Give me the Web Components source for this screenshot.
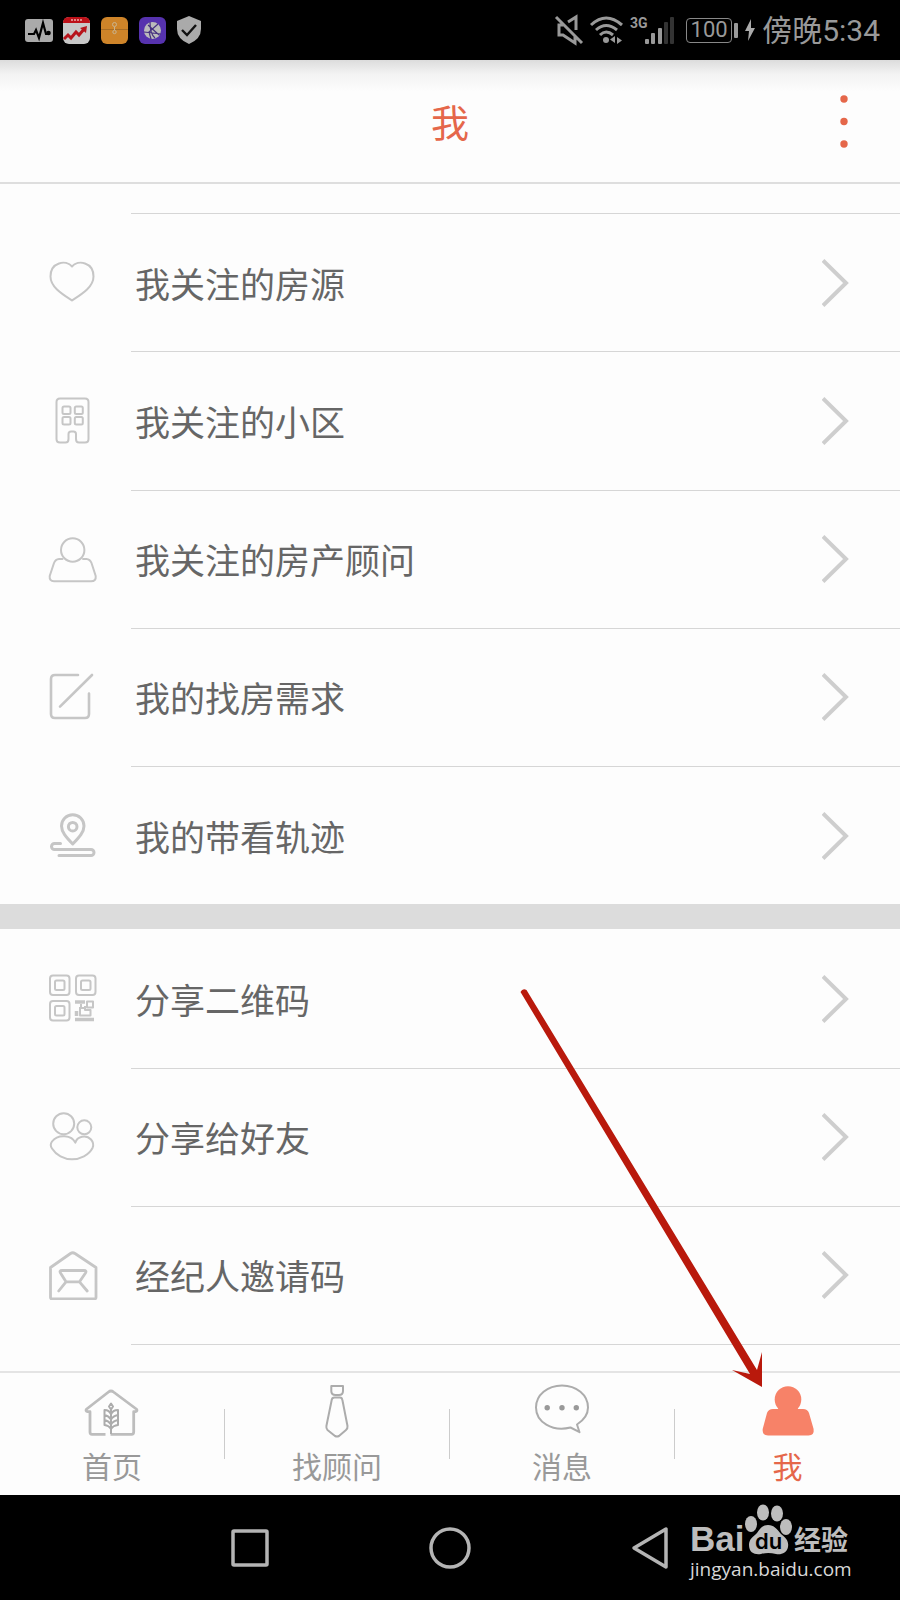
<!DOCTYPE html>
<html lang="zh-CN">
<head>
<meta charset="utf-8">
<meta name="viewport" content="width=device-width, initial-scale=1">
<title>我</title>
<style>
html, body { margin: 0; }
body { background: #fdfdfd; font-family: "Noto Sans CJK SC", sans-serif; }
</style>
</head>
<body>
<profile-screen>
  <status-bar slot="status"></status-bar>
  <app-header slot="header">我</app-header>
  <menu-section lead>
    <menu-row icon="heart">我关注的房源</menu-row>
    <menu-row icon="building">我关注的小区</menu-row>
    <menu-row icon="person">我关注的房产顾问</menu-row>
    <menu-row icon="edit">我的找房需求</menu-row>
    <menu-row icon="route">我的带看轨迹</menu-row>
  </menu-section>
  <menu-section band>
    <menu-row icon="qr" first>分享二维码</menu-row>
    <menu-row icon="friends">分享给好友</menu-row>
    <menu-row icon="invite">经纪人邀请码</menu-row>
  </menu-section>
  <tab-bar slot="tabs">
    <tab-item icon="home">首页</tab-item>
    <tab-item icon="tie">找顾问</tab-item>
    <tab-item icon="chat">消息</tab-item>
    <tab-item icon="me" active>我</tab-item>
  </tab-bar>
  <system-nav slot="nav"><site-mark></site-mark></system-nav>
  <pointer-arrow slot="tabs"></pointer-arrow>
</profile-screen>

<script>
const ICONS = {
  heart: '<path d="M24 9.500C18 2.500 2.500 5 2.500 19.500C2.500 30 14 37 24 43.500C34 37 45.500 30 45.500 19.500C45.500 5 30 2.500 24 9.500Z"/>',
  building: '<path d="M12 3.500H37Q40.500 3.500 40.500 7V44Q40.500 47.500 37 47.500H31Q28 47.500 28 44V39Q28 36.500 25.500 36.500H23Q20.500 36.500 20.500 39V44Q20.500 47.500 17.500 47.500H12Q8.500 47.500 8.500 44V7Q8.500 3.500 12 3.500Z"/><rect x="14.500" y="11.500" width="8" height="7.500" rx="1.500"/><rect x="26.800" y="11.500" width="8" height="7.500" rx="1.500"/><rect x="14.500" y="22" width="8" height="7.500" rx="1.500"/><rect x="26.800" y="22" width="8" height="7.500" rx="1.500"/>',
  person: '<circle cx="24.700" cy="16" r="11.700"/><path d="M14.500 25H11Q7.500 25.200 6 29L1.700 42Q1.200 47.300 6 47.300H43Q48.300 47.300 47.700 42L43.500 29Q42 25.200 38.500 25H35"/>',
  edit: '<path stroke-width="2.600" d="M30 3H7Q3 3 3 7V42Q3 46 7 46H37Q41 46 41 42V21.500M44 3L12 34.700"/>',
  route: '<g stroke-width="3"><path d="M24.700 34C18 27 13.500 22 13.500 16A11.200 11.200 0 0 1 36 16C36 22 31.500 27 24.700 34Z"/><circle cx="24.700" cy="16.700" r="4.300"/><path d="M12.500 33.500H6.500A3 3 0 0 0 6.500 39.500H43A3 3 0 0 1 43 45.500H11"/></g>',
  qr: '<rect x="2" y="2.500" width="19.500" height="19.500" rx="3"/><rect x="7" y="7.500" width="9.500" height="9.500" rx="1.500"/><rect x="28" y="2.500" width="19.500" height="19.500" rx="3"/><rect x="33" y="7.500" width="9.500" height="9.500" rx="1.500"/><rect x="2" y="28" width="19.500" height="19.500" rx="3"/><rect x="7" y="33" width="9.500" height="9.500" rx="1.500"/><g stroke-linecap="butt"><path stroke-width="3.500" d="M27 29H37M27 46.500H46M28.500 38V43"/><path d="M33 31V35H36M32 34V42.500H42.500V37H37V33"/><rect x="39" y="28.500" width="6" height="6"/></g>',
  friends: '<circle cx="15.700" cy="11.700" r="10.500"/><circle cx="36.300" cy="15.300" r="7"/><path d="M27.300 30.700C24 23 10 21.500 4 29.500Q1.500 33 4 36.500C8 43 16 47.300 24 47.300C32 47.300 41 43 44.500 36Q46.500 31.500 43 27.500C38 22 29 24.500 27.300 30.700Z"/>',
  invite: '<path stroke-width="2.800" d="M22.500 3.500Q24.700 2 27 3.500L48 17.500V47.500Q48 49 46 49H4.500Q2.500 49 2.500 47.500V17.500ZM14 20.500H36Q39 20.500 37.500 23L31.500 31.800H18L12.500 23Q11 20.500 14 20.500ZM18 31.800L10.700 41M31.500 31.800L39.200 41"/>',
  home: '<path stroke="#bdbdbd" stroke-width="2.800" d="M21.500 51.300H8Q6 51.300 6 49V28.700H3.500Q1 28 2.700 26L24.500 9Q27 7 29.500 9L52.300 26Q54 28 51.500 28.700H49.700V49Q49.700 51.300 47.500 51.300H26.500"/><path d="M27 51V25M27 20.500L25 23.500L27 26.500L29 23.500ZM20.500 27Q25.500 27 27 31.500Q28.500 27 34 27V32Q29 33 27 36.500Q25 33 20.500 32ZM20.500 32V37Q25 38 27 41.500Q29 38 34 37V32M20.500 37V42Q25 42.500 27 46Q29 42.500 34 42V37"/>',
  tie: '<path d="M22.300 3H34V8Q34 12 30 12H26.500Q22.300 12 22.300 8ZM25.500 14.500H31Q33 14.500 33.400 17L38.500 43Q38.800 45.500 37 47L30 53Q28 54 26 53L18.500 47Q17 45.500 17.400 43L22.700 17Q23 14.500 25.500 14.500Z"/>',
  chat: '<path d="M36.500 44.500C18 49 2 39 2 24.500C2 12 13.500 2.500 28 2.500S54 12 54 24.500C54 31 50 37 43 41.500L45.500 49.200Z"/><g fill="currentColor" stroke="none"><circle cx="13.200" cy="24.700" r="2.700"/><circle cx="28" cy="24.700" r="2.700"/><circle cx="42.300" cy="24.700" r="2.700"/></g>',
  me: '<g fill="#f78268" stroke="none"><circle cx="28" cy="16.500" r="13.300"/><path d="M13 26H18L20 22H36L38 26H43Q47.500 26 49 30L53.600 46Q54.500 52.500 48.500 52.500H8Q2 52.500 2.700 46L7 30Q8.500 26 13 26Z"/></g>'
};

function define(name, render) {
  customElements.define(name, class extends HTMLElement {
    constructor() {
      super();
      this.attachShadow({ mode: 'open' });
    }
    connectedCallback() {
      this.shadowRoot.innerHTML = render(this);
    }
  });
}

define('profile-screen', () => `
<style>
:host { display: flex; flex-direction: column; min-height: 100vh; }
main { flex: 1; display: flex; flex-direction: column; padding-bottom: 26px; }
footer { position: relative; }
</style>
<slot name="status"></slot>
<slot name="header"></slot>
<main><slot></slot></main>
<footer><slot name="tabs"></slot></footer>
<slot name="nav"></slot>`);

define('status-bar', () => `
<style>
:host { display: flex; align-items: center; justify-content: space-between; height: 60px; padding: 0 20px 0 25px; background: #000; color: #999; box-sizing: border-box; }
div { display: flex; align-items: center; }
.apps { gap: 10px; }
svg { display: block; overflow: visible; }
.state { gap: 7px; }
.signal { margin-right: 4px; }
.battery { display: flex; align-items: center; gap: 2px; }
.level { box-sizing: border-box; width: 46px; height: 25px; border: 1px solid #888; border-radius: 4px; font: 22px/22px Roboto, sans-serif; text-align: center; display: block; }
.cap { width: 4px; height: 15px; background: #999; border-radius: 1px; }
time { font: 30px/40px Roboto, "Noto Sans CJK SC", sans-serif; padding-top: 2px; }
</style>
<div class="apps">
<svg width="28" height="28" viewBox="0 0 28 28"><rect y="3" width="28" height="23" rx="3" fill="#aaa"/><path d="M3 18H9L11 14L14 22L18 7L21 18H24" fill="none" stroke="#000" stroke-width="2.200"/><circle cx="23.500" cy="17" r="2.300"/></svg>
<svg width="28" height="28" viewBox="0 0 28 28"><rect y="1" width="27" height="27" rx="6" fill="#c8c8c8"/><path d="M0 7Q0 1 6 1H21Q27 1 27 7Z" fill="#bd1119"/><path d="M8 4H19" stroke="#d88" stroke-width="2" stroke-dasharray="2 1"/><path d="M1 23L5 19L8 22L13 16L16 19L22 12" fill="none" stroke="#b7141b" stroke-width="3"/><path d="M24 10L23 17L17 12Z" fill="#b7141b"/></svg>
<svg width="28" height="28" viewBox="0 0 28 28"><rect y="1" width="27" height="27" rx="6" fill="#ce8429"/><path d="M0 13.500H27" stroke="#a86d25"/><g fill="none" stroke="#c9b48f"><circle cx="13.500" cy="8.500" r="2"/><path d="M13.500 11V14"/><circle cx="13.500" cy="16" r="1.700"/></g></svg>
<svg width="28" height="28" viewBox="0 0 28 28"><rect y="1" width="27" height="27" rx="6" fill="#5632ae"/><circle cx="13.500" cy="14.500" r="8.500" fill="#bbb"/><path d="M5 16L22 18M11 6Q11 18 16 22M19 8L10 16L12 23M9 9L20 19" fill="none" stroke="#463080" stroke-width="1.200"/></svg>
<svg width="24" height="28" viewBox="0 0 24 28"><path d="M12 0L24 5V13Q24 23 12 28Q0 23 0 13V5Z" fill="#aaa"/><path d="M5 14L10 19L19 9" fill="none" stroke="#111" stroke-width="2.400"/></svg>
</div>
<div class="state">
<svg width="28" height="28" viewBox="0 0 28 28" fill="none" stroke="#999" stroke-width="3"><path d="M1 1L27 27M8 9H4V19H8L20 27V20M13 6L21 1V14"/></svg>
<svg width="33" height="28" viewBox="0 0 33 28" fill="none" stroke="#999" stroke-width="3"><path d="M1 9Q16 -5 32 9M6 14Q16 5 27 14M10 19Q16 13 23 19"/><circle cx="16" cy="24" r="3" fill="#999" stroke="none"/><path d="M25 20V27L20 23.500ZM27 21V28L32 24.500Z" fill="#999" stroke="none"/></svg>
<svg class="signal" width="45" height="28" viewBox="0 0 45 28"><text x="0" y="12" fill="#999" font-family="Roboto, sans-serif" font-size="14" font-weight="700">3G</text><g fill="#999"><rect x="15" y="23" width="4" height="5" rx="1"/><rect x="21" y="17" width="4" height="11" rx="1"/><rect x="28" y="12" width="4" height="16" rx="1"/></g><g fill="#333"><rect x="34" y="6" width="4" height="22" rx="1"/><rect x="40" y="1" width="4" height="27" rx="1"/></g></svg>
<span class="battery"><span class="level">100</span><span class="cap"></span></span>
<svg width="10" height="22" viewBox="0 0 10 22"><path d="M6 0L0 12H4L3 22L10 9H6Z" fill="#aaa"/></svg>
<time datetime="17:34">傍晚5:34</time>
</div>`);

define('app-header', () => `
<style>
:host { display: grid; grid-template-columns: 1fr auto 1fr; align-items: center; height: 124px; box-sizing: border-box; border-bottom: 2px solid #dedede; background: linear-gradient(#dcdcdc, #f3f3f3 14px, #fdfdfd 32px); color: #e5674a; }
h1 { grid-column: 2; margin: 0; font-size: 38px; line-height: 48px; font-weight: 400; }
button { justify-self: end; margin-right: 40px; padding: 4px 12px; border: 0; background: none; color: inherit; }
svg { display: block; }
</style>
<h1><slot></slot></h1>
<button aria-label="更多"><svg width="8" height="54" viewBox="0 0 8 54" fill="currentColor"><circle cx="4" cy="5" r="3.700"/><circle cx="4" cy="27.500" r="3.700"/><circle cx="4" cy="50" r="3.700"/></svg></button>`);

define('menu-section', el => `
<style>
:host { display: flex; flex-direction: column; flex: ${el.children.length} 0 auto; }
:host([lead]) { padding-top: 29px; }
.band { height: 25px; background: #dcdcdc; }
.edge { height: 1px; margin-left: 131px; background: #d6d6d6; }
</style>
${el.hasAttribute('band') ? '<div class="band"></div>' : ''}
<slot></slot>
${el.hasAttribute('band') ? '<div class="edge"></div>' : ''}`);

define('menu-row', el => `
<style>
:host { display: flex; flex: 1 0 138px; }
a { flex: 1; display: grid; grid-template-columns: 131px 1fr; text-decoration: none; color: #666; }
.icon { align-self: center; margin-left: 48px; fill: none; stroke: #c6c6c6; stroke-width: 2; stroke-linecap: round; stroke-linejoin: round; }
.body { display: flex; align-items: center; justify-content: space-between; padding: 0 51px 0 4px; border-top: 1px solid #d6d6d6; }
:host([first]) .body { border-top-color: transparent; }
.label { font-size: 35px; line-height: 48px; }
.chevron { fill: none; stroke: #cecece; stroke-width: 4; }
</style>
<a href="#${el.getAttribute('icon')}">
<svg class="icon" width="50" height="50" viewBox="0 0 50 50" aria-hidden="true">${ICONS[el.getAttribute('icon')]}</svg>
<span class="body"><span class="label"><slot></slot></span>
<svg class="chevron" width="27" height="48" viewBox="0 0 27 48" aria-hidden="true"><path d="M1 1.500L24 24L1 46.500"/></svg></span>
</a>`);

define('tab-bar', () => `
<style>
:host { display: block; border-top: 2px solid #e4e4e4; }
nav { display: grid; grid-template-columns: repeat(4, 1fr); height: 122px; }
</style>
<nav><slot></slot></nav>`);

define('tab-item', el => `
<style>
:host { display: flex; align-items: center; color: #999; }
:host([active]) { color: #e5674a; }
:host(:not([active]))::after { content: ""; width: 1px; height: 50px; background: #ccc; }
a { flex: 1; display: flex; flex-direction: column; align-items: center; gap: 6px; color: inherit; text-decoration: none; font-size: 30px; line-height: 40px; }
svg { fill: none; stroke: #acacac; stroke-width: 2; stroke-linejoin: round; color: #999; }
</style>
<a href="#${el.getAttribute('icon')}"><svg width="56" height="56" viewBox="0 0 56 56" aria-hidden="true">${ICONS[el.getAttribute('icon')]}</svg><span><slot></slot></span></a>`);

define('system-nav', () => `
<style>
:host { display: flex; justify-content: center; align-items: center; position: relative; height: 105px; background: #000; }
button { width: 200px; height: 60px; padding: 0; border: 0; background: none; display: grid; place-items: center; }
svg { fill: none; stroke: #b4b4b4; stroke-width: 3.500; stroke-linejoin: round; }
</style>
<button aria-label="最近"><svg width="44" height="44" viewBox="0 0 44 44"><rect x="5" y="5" width="34" height="34" rx="1"/></svg></button>
<button aria-label="主屏幕"><svg width="44" height="44" viewBox="0 0 44 44"><circle cx="22" cy="22" r="19"/></svg></button>
<button aria-label="返回"><svg width="44" height="44" viewBox="0 0 44 44"><path d="M38 3V41L6 22Z"/></svg></button>
<slot></slot>`);

define('site-mark', () => `
<style>
:host { position: absolute; right: 48px; top: 12px; }
svg { display: block; overflow: visible; fill: #bdbdbd; }
</style>
<svg width="162" height="80" viewBox="0 0 162 80">
<text x="0" y="44" font-family="'Liberation Sans', sans-serif" font-size="35" font-weight="700">Bai</text>
<ellipse cx="61" cy="17" rx="6" ry="8"/><ellipse cx="73" cy="5.500" rx="6" ry="8"/><ellipse cx="87" cy="6.500" rx="6" ry="8"/><ellipse cx="96" cy="20" rx="6" ry="8"/>
<path d="M78 18C84 18 87 22 91 27C96 31 99 34 98 40C97 46 91 48 86 47Q78 45 71 47C65 48 59 46 59 38C59 32 63 30 67 26C70 22 72 18 78 18Z"/>
<text x="65" y="42" font-family="Inter, sans-serif" font-size="22" font-weight="600" fill="#000">du</text>
<text x="104" y="43" font-family="'Noto Sans CJK SC', sans-serif" font-size="27" font-weight="700">经验</text>
<text x="0" y="69" font-family="'Open Sans', sans-serif" font-size="19" fill="#d8d8d8">jingyan.baidu.com</text>
</svg>`);

define('pointer-arrow', () => `
<style>
:host { position: absolute; right: 136px; bottom: 106px; pointer-events: none; }
svg { display: block; fill: #b9190c; }
</style>
<svg width="244" height="400" viewBox="0 0 244 400" aria-hidden="true"><path d="M0.500 3Q2.500 -1 6.500 1L237 381L242 363L242 398L212 381L230 385Z"/></svg>`);
</script>
</body>
</html>
